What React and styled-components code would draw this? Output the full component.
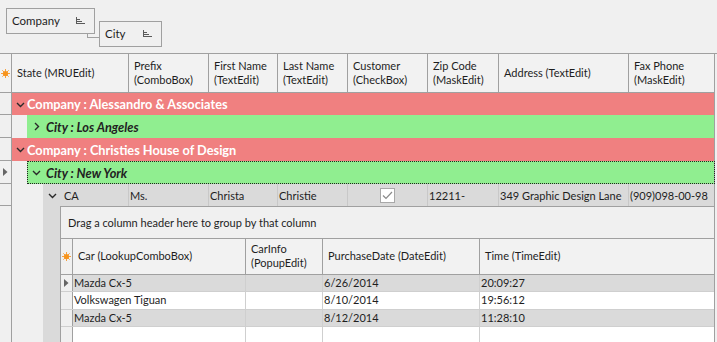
import React from 'react';
import styled, { createGlobalStyle } from 'styled-components';

const GlobalStyle = createGlobalStyle`
    body {
        margin: 0;
        background: #f0f0f0;
        font-family: Lato, "Noto Sans", sans-serif;
        font-size: 11px;
        color: #1e1e1e;
    }
`;

const LINE = '#a0a0a0';
const SOFT = '#c8c8c8';
const ROW_GRAY = '#dadada';

const Frame = styled.div`
    width: 717px;
    height: 342px;
    overflow: hidden;
    background: #f0f0f0;
`;

const GroupPanel = styled.div`
    height: 54px;
    display: flex;
    align-items: flex-start;
    padding: 8px 0 0 6px;
    box-sizing: border-box;
    border-bottom: 1px solid ${LINE};
`;

const GroupChip = styled.div`
    position: relative;
    box-sizing: border-box;
    width: ${p => p.$width}px;
    height: 26px;
    margin-top: ${p => (p.$level ? 13 : 0)}px;
    margin-left: ${p => (p.$level ? 4 : 0)}px;
    border: 1px solid ${LINE};
    background: #f0f0f0;
    display: flex;
    align-items: center;
    justify-content: space-between;
    padding: 0 9px 1px 5px;
    font-size: 11.5px;
    &::before {
        content: ${p => (p.$level ? '""' : 'none')};
        position: absolute;
        left: -13px;
        top: 11px;
        width: 12px;
        height: 4px;
        border-left: 1px solid ${LINE};
        border-bottom: 1px solid ${LINE};
    }
`;

const Grid = styled.div`
    width: 715px;
`;

const HeaderRow = styled.div`
    display: grid;
    grid-template-columns: 12px 117px 80px 69px 70px 80px 71px 130px 86px;
    height: 39px;
    border-bottom: 1px solid ${LINE};
    box-sizing: border-box;
    background: #f2f2f2;
`;

const HeaderCell = styled.div`
    border-right: 1px solid ${LINE};
    display: flex;
    align-items: center;
    justify-content: ${p => (p.$center ? 'center' : 'flex-start')};
    padding-left: ${p => (p.$center ? 0 : 5)}px;
    line-height: 14px;
    white-space: pre;
`;

const GroupRow = styled.div`
    display: flex;
    height: ${p => p.$height || 23}px;
`;

const Indicator = styled.div`
    width: 12px;
    flex: none;
    box-sizing: border-box;
    border-right: 1px solid ${LINE};
    border-bottom: 1px solid ${LINE};
    background: #f0f0f0;
    display: flex;
    align-items: center;
    justify-content: center;
`;

const Indent = styled.div`
    width: ${p => p.$width}px;
    flex: none;
    background: #f0f0f0;
`;

const GroupBar = styled.div`
    flex: 1;
    box-sizing: border-box;
    display: flex;
    align-items: center;
    background: ${p => (p.$kind === 'company' ? '#f08080' : '#90ee90')};
    color: ${p => (p.$kind === 'company' ? '#ffffff' : '#222222')};
    font-weight: bold;
    font-style: ${p => (p.$kind === 'company' ? 'normal' : 'italic')};
    font-size: 12.75px;
    border-right: 1px solid ${LINE};
    outline: ${p => (p.$focused ? '1px dotted #222' : 'none')};
    outline-offset: -1px;
    padding-left: ${p => (p.$kind === 'company' ? 4 : 5)}px;
    gap: ${p => (p.$kind === 'company' ? 2 : 5)}px;
`;

const DataRow = styled.div`
    display: grid;
    grid-template-columns: 12px 15px 16px 86px 80px 69px 70px 80px 71px 130px 86px;
    height: 22px;
`;

const DataCell = styled.div`
    background: ${ROW_GRAY};
    border-right: 1px solid ${p => (p.$last ? LINE : SOFT)};
    display: flex;
    align-items: center;
    justify-content: ${p => (p.$center ? 'center' : 'flex-start')};
    padding-left: ${p => p.$pad ?? 1}px;
    gap: 7px;
    white-space: nowrap;
    overflow: hidden;
`;

const CheckBox = styled.div`
    width: 15px;
    height: 15px;
    box-sizing: border-box;
    border: 1px solid #a8a8a8;
    background: #ffffff;
    display: flex;
    align-items: center;
    justify-content: center;
`;

const DetailArea = styled.div`
    display: flex;
    height: 140px;
`;

const MasterStrip = styled.div`
    width: 17px;
    flex: none;
    background: ${ROW_GRAY};
`;

const DetailPanel = styled.div`
    flex: 1;
    border: 1px solid ${LINE};
    background: #f0f0f0;
    display: flex;
    flex-direction: column;
`;

const DragHint = styled.div`
    height: 35px;
    display: flex;
    align-items: center;
    padding-left: 7px;
    border-bottom: 1px solid ${LINE};
    box-sizing: border-box;
`;

const InnerRow = styled.div`
    display: grid;
    grid-template-columns: 12px 173px 77px 157px 234px;
    height: ${p => (p.$header ? 38 : 19)}px;
    box-sizing: border-box;
    border-bottom: 1px solid ${p => (p.$header ? LINE : '#cfcfcf')};
    background: ${p => (p.$header ? '#f2f2f2' : p.$shade ? ROW_GRAY : '#ffffff')};
`;

const InnerCell = styled.div`
    border-right: 1px solid ${p => (p.$header ? LINE : '#cfcfcf')};
    display: flex;
    align-items: center;
    padding-left: ${p => (p.$header ? 5 : 1)}px;
    line-height: 14px;
    white-space: pre;
    &:last-child {
        border-right: none;
    }
`;

const InnerIndicator = styled.div`
    background: #f0f0f0;
    border-right: 1px solid ${LINE};
    display: flex;
    align-items: center;
    justify-content: center;
`;

const SortIcon = () => (
    <svg width="9" height="7" viewBox="0 0 9 7">
        <g fill="#5a5a5a">
            <rect x="0" y="0" width="1" height="7" />
            <rect x="1" y="2" width="3" height="1" />
            <rect x="1" y="4" width="5" height="1" />
            <rect x="1" y="6" width="8" height="1" />
        </g>
    </svg>
);

const NewRowStar = () => (
    <svg width="9" height="9" viewBox="0 0 9 9">
        <g stroke="#f5a142" strokeWidth="1">
            <line x1="4.5" y1="0" x2="4.5" y2="9" />
            <line x1="0" y1="4.5" x2="9" y2="4.5" />
            <line x1="1.3" y1="1.3" x2="7.7" y2="7.7" />
            <line x1="7.7" y1="1.3" x2="1.3" y2="7.7" />
        </g>
        <circle cx="4.5" cy="4.5" r="2.6" fill="#f7941d" />
    </svg>
);

const RowArrow = () => (
    <svg width="5" height="8" viewBox="0 0 5 8">
        <path d="M0 0 L4.5 4 L0 8 Z" fill="#666" />
    </svg>
);

const Chevron = ({ open }) => (
    <svg width="9" height="9" viewBox="0 0 9 9">
        <path d={open ? 'M1 3 L4.5 6.5 L8 3' : 'M3 1 L6.5 4.5 L3 8'}
              fill="none" stroke="#2a2a2a" strokeWidth="1.4" />
    </svg>
);

const Check = () => (
    <svg width="11" height="9" viewBox="0 0 11 9">
        <path d="M1 4.5 L4 7.5 L10 1" fill="none" stroke="#8a8a8a" strokeWidth="1.2" />
    </svg>
);

const columns = ['State (MRUEdit)', 'Prefix\n(ComboBox)', 'First Name\n(TextEdit)', 'Last Name\n(TextEdit)',
    'Customer\n(CheckBox)', 'Zip Code\n(MaskEdit)', 'Address (TextEdit)', 'Fax Phone\n(MaskEdit)'];

const cars = [
    ['Mazda Cx-5', '', '6/26/2014', '20:09:27'],
    ['Volkswagen Tiguan', '', '8/10/2014', '19:56:12'],
    ['Mazda Cx-5', '', '8/12/2014', '11:28:10'],
];

function Group({ kind, text, open, focused, level, height, arrow }) {
    return (
        <GroupRow $height={height}>
            <Indicator>{arrow && <RowArrow />}</Indicator>
            {level > 0 && <Indent $width={15} />}
            <GroupBar $kind={kind} $focused={focused}>
                <Chevron open={open} />
                <span>{text}</span>
            </GroupBar>
        </GroupRow>
    );
}

export default function App() {
    return (
        <Frame>
            <GlobalStyle />
            <GroupPanel>
                <GroupChip $width={89}>Company <SortIcon /></GroupChip>
                <GroupChip $width={63} $level={1}>City <SortIcon /></GroupChip>
            </GroupPanel>
            <Grid>
                <HeaderRow>
                    <HeaderCell $center><NewRowStar /></HeaderCell>
                    {columns.map(c => <HeaderCell key={c}>{c}</HeaderCell>)}
                </HeaderRow>
                <Group kind="company" text="Company : Alessandro & Associates" open level={0} height={22} />
                <Group kind="city" text="City : Los Angeles" level={1} />
                <Group kind="company" text="Company : Christies House of Design" open level={0} />
                <Group kind="city" text="City : New York" open focused arrow level={1} />
                <DataRow>
                    <Indicator />
                    <Indent $width={15} />
                    <Indent $width={16} />
                    <DataCell $pad={5}><Chevron open /><span>CA</span></DataCell>
                    <DataCell>Ms.</DataCell>
                    <DataCell>Christa</DataCell>
                    <DataCell>Christie</DataCell>
                    <DataCell $center $pad={0}><CheckBox><Check /></CheckBox></DataCell>
                    <DataCell>12211-</DataCell>
                    <DataCell>349 Graphic Design Lane</DataCell>
                    <DataCell $last>(909)098-00-98</DataCell>
                </DataRow>
                <DetailArea>
                    <Indicator />
                    <Indent $width={15} />
                    <Indent $width={16} />
                    <MasterStrip />
                    <DetailPanel>
                        <DragHint>Drag a column header here to group by that column</DragHint>
                        <InnerRow $header>
                            <InnerIndicator><NewRowStar /></InnerIndicator>
                            <InnerCell $header>Car (LookupComboBox)</InnerCell>
                            <InnerCell $header>{'CarInfo\n(PopupEdit)'}</InnerCell>
                            <InnerCell $header>PurchaseDate (DateEdit)</InnerCell>
                            <InnerCell $header>Time (TimeEdit)</InnerCell>
                        </InnerRow>
                        {cars.map((r, i) => (
                            <InnerRow key={i} $shade={i !== 1}>
                                <InnerIndicator>{i === 0 && <RowArrow />}</InnerIndicator>
                                {r.map((v, k) => <InnerCell key={k}>{v}</InnerCell>)}
                            </InnerRow>
                        ))}
                        <InnerRow>
                            <InnerIndicator />
                            <InnerCell />
                            <InnerCell />
                            <InnerCell />
                            <InnerCell />
                        </InnerRow>
                    </DetailPanel>
                </DetailArea>
            </Grid>
        </Frame>
    );
}
